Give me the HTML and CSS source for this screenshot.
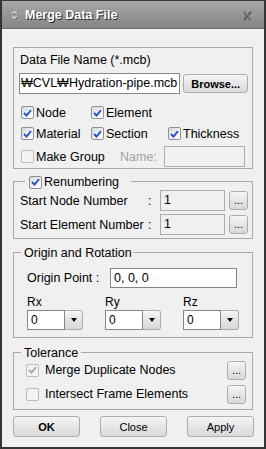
FILE: index.html
```html
<!DOCTYPE html>
<html>
<head>
<meta charset="utf-8">
<link rel="stylesheet" href="styles.css">
</head>
<body>
<div class="window">
  <div class="titlebar">
    <svg class="grip" width="7" height="10" viewBox="0 0 7 10"><path d="M1.5 4.5 L4 2 L6.5 4.5 M1.5 6.5 L4 9 L6.5 6.5" fill="none" stroke="#4a4a4a" stroke-width="1.2"/><path d="M1 4 L3.5 1.5 L6 4 M1 6 L3.5 8.5 L6 6" fill="none" stroke="#e8e8e8" stroke-width="1.2"/></svg>
    <span class="title">Merge Data File</span>
    <svg class="close" width="11" height="10" viewBox="0 0 11 10"><path d="M1 0.5 H4 M7 0.5 H10 M1 9.5 H4 M7 9.5 H10" stroke="#8a8a8a" stroke-width="1"/><path d="M2 1 L9 9 M9 1 L2 9" stroke="#5e5e5e" stroke-width="2"/><path d="M2.5 0.5 L9.5 8.5" stroke="#b5b5b5" stroke-width="0.7"/></svg>
  </div>
  <div class="content">
    <div class="group g1">
      <div class="lbl">Data File Name (*.mcb)</div>
      <div class="file-row">
        <div class="input file"><span>C:₩CVL₩Hydration-pipe.mcb</span></div>
        <button class="btn browse">Browse...</button>
      </div>
      <div class="check-grid">
        <div class="chk"><span class="box"><svg width="9" height="8" viewBox="0 0 9 8"><path d="M1 4 L3.5 6.5 L8 1.2" fill="none" stroke="#2257c0" stroke-width="1.9"/></svg></span>Node</div>
        <div class="chk"><span class="box"><svg width="9" height="8" viewBox="0 0 9 8"><path d="M1 4 L3.5 6.5 L8 1.2" fill="none" stroke="#2257c0" stroke-width="1.9"/></svg></span>Element</div>
        <div></div>
        <div class="chk"><span class="box"><svg width="9" height="8" viewBox="0 0 9 8"><path d="M1 4 L3.5 6.5 L8 1.2" fill="none" stroke="#2257c0" stroke-width="1.9"/></svg></span>Material</div>
        <div class="chk"><span class="box"><svg width="9" height="8" viewBox="0 0 9 8"><path d="M1 4 L3.5 6.5 L8 1.2" fill="none" stroke="#2257c0" stroke-width="1.9"/></svg></span>Section</div>
        <div class="chk"><span class="box"><svg width="9" height="8" viewBox="0 0 9 8"><path d="M1 4 L3.5 6.5 L8 1.2" fill="none" stroke="#2257c0" stroke-width="1.9"/></svg></span>Thickness</div>
      </div>
      <div class="group-row">
        <div class="chk mg"><span class="box dis"></span>Make Group</div>
        <span class="name-lbl">Name:</span>
        <div class="input dis name"></div>
      </div>
    </div>

    <div class="fs fs2">
      <div class="fs-head wide"><span class="legend leg-chk"><span class="box"><svg width="9" height="8" viewBox="0 0 9 8"><path d="M1 4 L3.5 6.5 L8 1.2" fill="none" stroke="#2257c0" stroke-width="1.9"/></svg></span>Renumbering</span></div>
      <div class="fs-body renum">
        <div class="num-row">
          <span>Start Node Number</span><span>:</span>
          <div class="input dis">1</div>
          <button class="btn dots">...</button>
        </div>
        <div class="num-row">
          <span>Start Element Number</span><span>:</span>
          <div class="input dis">1</div>
          <button class="btn dots">...</button>
        </div>
      </div>
    </div>

    <div class="fs fs3">
      <div class="fs-head"><span class="legend">Origin and Rotation</span></div>
      <div class="fs-body origin">
        <div class="origin-row">
          <span class="origin-lbl">Origin Point :</span>
          <div class="input white origin-in">0, 0, 0</div>
        </div>
        <div class="axis-grid axis-lbls">
          <span>Rx</span><span>Ry</span><span>Rz</span>
        </div>
        <div class="axis-grid">
          <div class="combo"><div class="val">0</div><div class="arrow"><span class="tri"></span></div></div>
          <div class="combo"><div class="val">0</div><div class="arrow"><span class="tri"></span></div></div>
          <div class="combo"><div class="val">0</div><div class="arrow"><span class="tri"></span></div></div>
        </div>
      </div>
    </div>

    <div class="fs fs4">
      <div class="fs-head"><span class="legend tol">Tolerance</span></div>
      <div class="fs-body tolb">
        <div class="tol-row">
          <span class="box dis"><svg width="9" height="8" viewBox="0 0 9 8"><path d="M1 4 L3.5 6.5 L8 1.2" fill="none" stroke="#a8a8a8" stroke-width="1.9"/></svg></span>
          <span class="tol-txt">Merge Duplicate Nodes</span>
          <button class="btn dots">...</button>
        </div>
        <div class="tol-row">
          <span class="box dis"></span>
          <span class="tol-txt">Intersect Frame Elements</span>
          <button class="btn dots">...</button>
        </div>
      </div>
    </div>

    <div class="actions">
      <button class="btn act ok">OK</button>
      <button class="btn act">Close</button>
      <button class="btn act">Apply</button>
    </div>
  </div>
</div>
</body>
</html>
```
FILE: styles.css
```css
* { box-sizing: border-box; }
html, body { margin: 0; padding: 0; }
body {
  width: 266px; height: 449px; overflow: hidden;
  font-family: "Liberation Sans", Arial, sans-serif;
  font-size: 12.5px; color: #000; background: #f0f0f0;
}
.window {
  width: 266px; height: 449px;
  border: 2px solid #343434; border-top: 1px solid #3a3a3a;
  background: #f0f0f0;
  display: flex; flex-direction: column;
}
.titlebar {
  height: 28px; flex: none;
  background: linear-gradient(#a8a8a8, #858585);
  border-bottom: 1px solid #707070;
  display: flex; align-items: center;
  padding-left: 9px; padding-right: 11px;
}
.grip { flex: none; }
.title {
  margin-left: 7px;
  font-weight: bold; font-size: 12.5px; color: #fff;
  text-shadow: 1px 1px 0 #2a2a2a;
}
.close { margin-left: auto; margin-top: 2px; }

.content { flex: 1; padding: 0 11px; }

.group { border: 1px solid #a9a9a9; }
.g1 { margin-top: 18px; padding: 5px 4px 1px 5px; }
.lbl { height: 14px; line-height: 14px; padding-left: 1px; }
.file-row { display: flex; align-items: center; margin-top: 6px; height: 21px; }
.input {
  height: 21px; border: 1px solid #82868e; background: #fff;
  line-height: 19px; padding-left: 2px; white-space: nowrap; overflow: hidden;
}
.input.dis { background: #f0f0f0; border-color: #adadad; }
.file { width: 162px; display: flex; justify-content: flex-end; padding-right: 2px; }
.btn {
  font-family: "Liberation Sans", Arial, sans-serif; font-size: 11px; color: #000;
  border: 1px solid #acacac; border-radius: 3px;
  background: linear-gradient(#f6f6f6, #e4e4e4 55%, #dadada);
  padding: 0; margin: 0;
}
.browse { width: 65px; height: 19px; margin-left: 3px; font-weight: bold; }

.check-grid {
  display: grid; grid-template-columns: 70px 77px 1fr;
  grid-auto-rows: 21px; margin-top: 8px; padding-left: 2px;
}
.chk { display: flex; align-items: center; gap: 2px; white-space: nowrap; }
.box {
  width: 13px; height: 13px; flex: none;
  border: 1px solid #8f9090; border-radius: 2px;
  background: linear-gradient(135deg, #d4d8de, #f7f7f7 70%, #fff);
  display: inline-flex; align-items: center; justify-content: center;
}
.box.dis { border-color: #bdbdbd; background: #f4f4f4; }
.group-row { display: flex; align-items: center; height: 21px; margin-top: 2px; padding-left: 2px; }
.mg { width: 99px; }
.name-lbl { width: 44px; color: #a2a2a2; }
.name { width: 81px; }

.fs-head { display: flex; height: 14px; align-items: center; }
.fs-head::before {
  content: ""; width: 7px; height: 7px; align-self: flex-end;
  border-top: 1px solid #a9a9a9; border-left: 1px solid #a9a9a9;
}
.fs-head.wide::before { width: 11px; }
.fs-head::after {
  content: ""; flex: 1; height: 7px; align-self: flex-end;
  border-top: 1px solid #a9a9a9; border-right: 1px solid #a9a9a9;
}
.legend { padding: 0 1px 0 3px; line-height: 14px; white-space: nowrap; }
.legend.tol { padding-right: 3px; }
.leg-chk { display: flex; align-items: center; gap: 2px; padding: 0 12px 0 4px; }
.fs-body { border: 1px solid #a9a9a9; border-top: none; }

.fs2 { margin-top: 6px; }
.renum { padding: 1px 4px 3px 6px; display: flex; flex-direction: column; gap: 3px; }
.num-row {
  display: grid; grid-template-columns: 128px 12px 65px 19px; column-gap: 0;
  height: 21px; align-items: center;
}
.num-row .input { padding-left: 3px; }
.num-row .dots { margin-left: 4px; }
.dots {
  width: 19px; height: 19px; line-height: 1;
  display: flex; align-items: flex-end; justify-content: center; padding-bottom: 3px;
}

.fs3 { margin-top: 7px; }
.origin { padding: 8px 4px 7px 13px; }
.origin-row { display: flex; align-items: center; height: 20px; }
.origin-lbl { width: 83px; }
.origin-in { width: 127px; height: 20px; line-height: 18px; padding-left: 3px; }
.axis-grid { display: grid; grid-template-columns: 78px 78px 56px; }
.axis-lbls { margin-top: 7px; height: 14px; line-height: 14px; font-size: 12px; }
.combo { display: flex; width: 56px; height: 20px; margin-top: 1px; }
.combo .val {
  width: 38px; border: 1px solid #82868e; background: #fff;
  line-height: 18px; padding-left: 3px; font-size: 12px;
}
.combo .arrow {
  width: 18px; border: 1px solid #acacac; border-left: none;
  border-radius: 0 3px 3px 0;
  background: linear-gradient(#f6f6f6, #e2e2e2 55%, #d8d8d8);
  display: flex; align-items: center; justify-content: center;
}
.tri {
  width: 0; height: 0;
  border-left: 3.5px solid transparent; border-right: 3.5px solid transparent;
  border-top: 4px solid #000;
}

.fs4 { margin-top: 8px; }
.tolb { padding: 0 6px 5px 12px; display: flex; flex-direction: column; gap: 4px; }
.tol-row { display: flex; align-items: center; height: 20px; }
.tol-txt { margin-left: 6px; }
.tol-row .dots { margin-left: auto; }

.actions {
  display: flex; justify-content: space-between;
  margin-top: 6px; margin-right: -1px;
}
.act { width: 67px; height: 21px; }
.ok { font-weight: bold; }
```
